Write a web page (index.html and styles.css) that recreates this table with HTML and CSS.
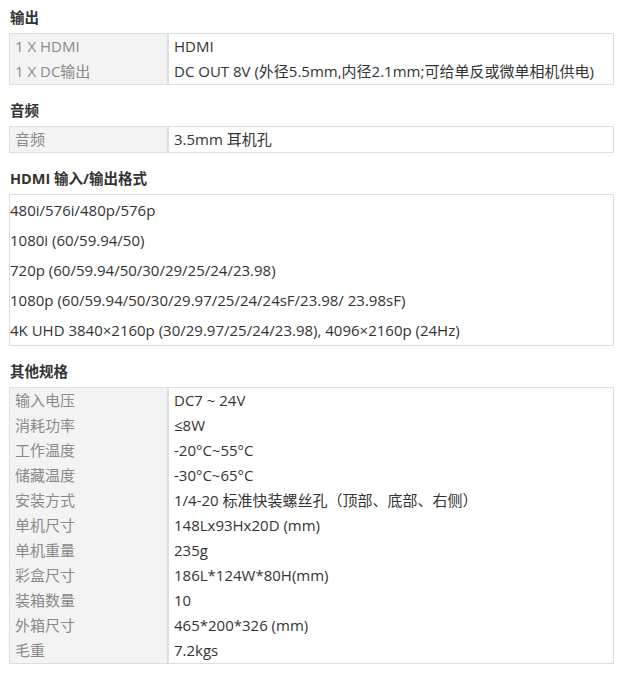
FILE: index.html
```html
<!DOCTYPE html>
<html lang="zh-CN">
<head>
  <meta charset="UTF-8" />
  <meta name="viewport" content="width=device-width, initial-scale=1.0" />
  <title>规格参数</title>
  <link rel="stylesheet" href="styles.css">
</head>
<body>
  <div class="specs">
    <h3 class="spec-title">输出</h3>
    <table class="spec-table">
      <tr><td class="label">1 X HDMI</td><td>HDMI</td></tr>
      <tr><td class="label">1 X DC输出</td><td>DC OUT 8V (外径5.5mm,内径2.1mm;可给单反或微单相机供电)</td></tr>
    </table>

    <h3 class="spec-title">音频</h3>
    <table class="spec-table">
      <tr><td class="label">音频</td><td>3.5mm 耳机孔</td></tr>
    </table>

    <h3 class="spec-title">HDMI 输入/输出格式</h3>
    <div class="format-box">
      <p>480i/576i/480p/576p</p>
      <p>1080i (60/59.94/50)</p>
      <p>720p (60/59.94/50/30/29/25/24/23.98)</p>
      <p>1080p (60/59.94/50/30/29.97/25/24/24sF/23.98/ 23.98sF)</p>
      <p>4K UHD 3840×2160p (30/29.97/25/24/23.98), 4096×2160p (24Hz)</p>
    </div>

    <h3 class="spec-title">其他规格</h3>
    <table class="spec-table">
      <tr><td class="label">输入电压</td><td>DC7 ~ 24V</td></tr>
      <tr><td class="label">消耗功率</td><td>≤8W</td></tr>
      <tr><td class="label">工作温度</td><td>-20°C~55°C</td></tr>
      <tr><td class="label">储藏温度</td><td>-30°C~65°C</td></tr>
      <tr><td class="label">安装方式</td><td>1/4-20 标准快装螺丝孔（顶部、底部、右侧）</td></tr>
      <tr><td class="label">单机尺寸</td><td>148Lx93Hx20D (mm)</td></tr>
      <tr><td class="label">单机重量</td><td>235g</td></tr>
      <tr><td class="label">彩盒尺寸</td><td>186L*124W*80H(mm)</td></tr>
      <tr><td class="label">装箱数量</td><td>10</td></tr>
      <tr><td class="label">外箱尺寸</td><td>465*200*326 (mm)</td></tr>
      <tr><td class="label">毛重</td><td>7.2kgs</td></tr>
    </table>
  </div>
</body>
</html>
```

FILE: styles.css
```css
body {
  margin: 0;
  padding: 0 0 0 9px;
  background-color: #fff;
  font-family: 'Open Sans', 'Noto Sans CJK SC', sans-serif;
  font-size: 15px;
  color: #333;
}

.specs {
  width: 605px;
  padding-top: 8px;
}

.spec-title {
  margin: 0 0 5px 1px;
  height: 20px;
  line-height: 20px;
  font-size: 14.5px;
  font-weight: 700;
  color: #333;
}

.spec-table,
.format-box {
  width: 100%;
  margin-bottom: 16px;
  border: 1px solid #dedede;
  box-sizing: border-box;
}

.spec-table {
  border-collapse: collapse;
}

.spec-table td {
  height: 25px;
  padding: 0 0 0 5px;
  line-height: 25px;
  white-space: nowrap;
}

.spec-table td.label {
  width: 152px;
  background-color: #f3f3f3;
  border-right: 2px solid #dedede;
  color: #8a8a8a;
}

.format-box p {
  margin: 0;
  height: 30px;
  line-height: 30px;
}
```
